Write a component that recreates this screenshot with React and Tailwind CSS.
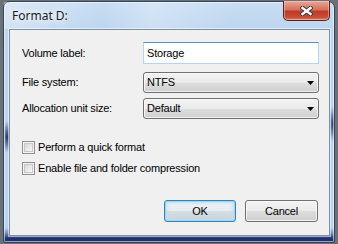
const ui = "font-['Liberation_Sans',Arial,sans-serif] text-[11px] tracking-[-0.2px] text-black"

function Combo({ value }) {
  return (
    <div className="flex h-[21px] w-[176px] items-center justify-between rounded-[3px] border border-[#707070] bg-[linear-gradient(to_bottom,#f2f2f2_0%,#ebebeb_50%,#dddddd_51%,#cfcfcf_100%)] pl-[3px] pr-[4px] shadow-[inset_0_0_0_1px_rgba(255,255,255,0.7)]">
      <span>{value}</span>
      <svg width="7" height="4" viewBox="0 0 7 4">
        <path d="M0 0 H7 L3.5 4 Z" fill="#000" />
      </svg>
    </div>
  )
}

function Check({ label, className = '' }) {
  return (
    <div className={`flex h-[13px] items-center gap-[3px] ${className}`}>
      <div className="h-[13px] w-[13px] border border-[#8e8f8f] bg-[#f4f4f4] p-[1px]">
        <div className="h-full w-full border border-[#c8c8c8] bg-[linear-gradient(135deg,#d8d8d8,#f8f8f8)]" />
      </div>
      <span>{label}</span>
    </div>
  )
}

export default function App() {
  return (
    <div className="h-[244px] w-[338px] overflow-hidden bg-[#6b7178] pl-[3px] pt-[1px]">
      <div className="flex h-[242px] w-[332px] flex-col rounded-t-[7px] rounded-b-[2px] border border-[#34445a] bg-[radial-gradient(4px_16px_at_3px_135px,#1e2a66,transparent),radial-gradient(4px_18px_at_329px_122px,#1e2a66,transparent),linear-gradient(to_bottom,#c8ddf3_0%,#bcd5ee_12%,#b8d3ef_94%,#6f86b8_96.5%,#22306e_98.5%)] shadow-[inset_0_0_0_1px_rgba(255,255,255,0.55)]">
        <div className="flex h-[27px] items-start justify-between bg-[linear-gradient(100deg,rgba(255,255,255,0.35)_0%,rgba(255,255,255,0)_30%,rgba(255,255,255,0.25)_45%,rgba(255,255,255,0)_70%)]">
          <span className="self-center pl-[8px] font-['Noto_Sans',sans-serif] text-[12px] text-[#1b1b1b] [text-shadow:0_0_6px_#fff,0_0_10px_#fff]">
            Format D:
          </span>
          <div className="mr-[4px] -mt-[1px] flex h-[20px] w-[47px] items-center justify-center rounded-b-[5px] border border-t-0 border-[#5b1f19] bg-[linear-gradient(to_bottom,#e9a697_0%,#d6725e_45%,#bf3a27_55%,#c64c36_85%,#dd7f63_100%)] shadow-[inset_0_0_0_1px_rgba(255,220,210,0.45)]">
            <svg width="13" height="10" viewBox="0 0 13 10">
              <path d="M2.5 2 L10.5 8 M10.5 2 L2.5 8" stroke="#3b3b3b" strokeWidth="4.4" strokeLinecap="square" />
              <path d="M2.5 2 L10.5 8 M10.5 2 L2.5 8" stroke="#fff" strokeWidth="2.4" strokeLinecap="square" />
            </svg>
          </div>
        </div>

        <div className={`ml-[5px] flex h-[207px] w-[321px] flex-col border border-[#7f8fa4] bg-[#f0f0f0] pl-[12px] pr-[10px] pt-[12px] shadow-[0_0_0_1px_rgba(255,255,255,0.5)] ${ui}`}>
          <div className="grid grid-cols-[121px_176px] items-center">
            <span>Volume label:</span>
            <div className="flex h-[22px] items-center border border-[#b7d5ea] border-t-[#5794bf] bg-white pl-[3px]">
              Storage
            </div>
            <span className="mt-[8px]">File system:</span>
            <div className="mt-[8px]">
              <Combo value="NTFS" />
            </div>
            <span className="mt-[5px]">Allocation unit size:</span>
            <div className="mt-[5px]">
              <Combo value="Default" />
            </div>
          </div>

          <Check label="Perform a quick format" className="mt-[22px]" />
          <Check label="Enable file and folder compression" className="mt-[8px]" />

          <div className="mt-[25px] flex justify-end gap-[9px] pr-[1px]">
            <button className="h-[22px] w-[72px] rounded-[3px] border border-[#3c7fb1] bg-[linear-gradient(to_bottom,#eef3f6_0%,#e6ecf0_50%,#d6dde3_51%,#cbd3da_100%)] shadow-[inset_0_0_0_1px_#9fd5f5,inset_0_0_3px_2px_#b6e1f8]">
              OK
            </button>
            <button className="h-[22px] w-[73px] rounded-[3px] border border-[#707070] bg-[linear-gradient(to_bottom,#f2f2f2_0%,#ebebeb_50%,#dddddd_51%,#cfcfcf_100%)] shadow-[inset_0_0_0_1px_rgba(255,255,255,0.7)]">
              Cancel
            </button>
          </div>
        </div>
      </div>
    </div>
  )
}
